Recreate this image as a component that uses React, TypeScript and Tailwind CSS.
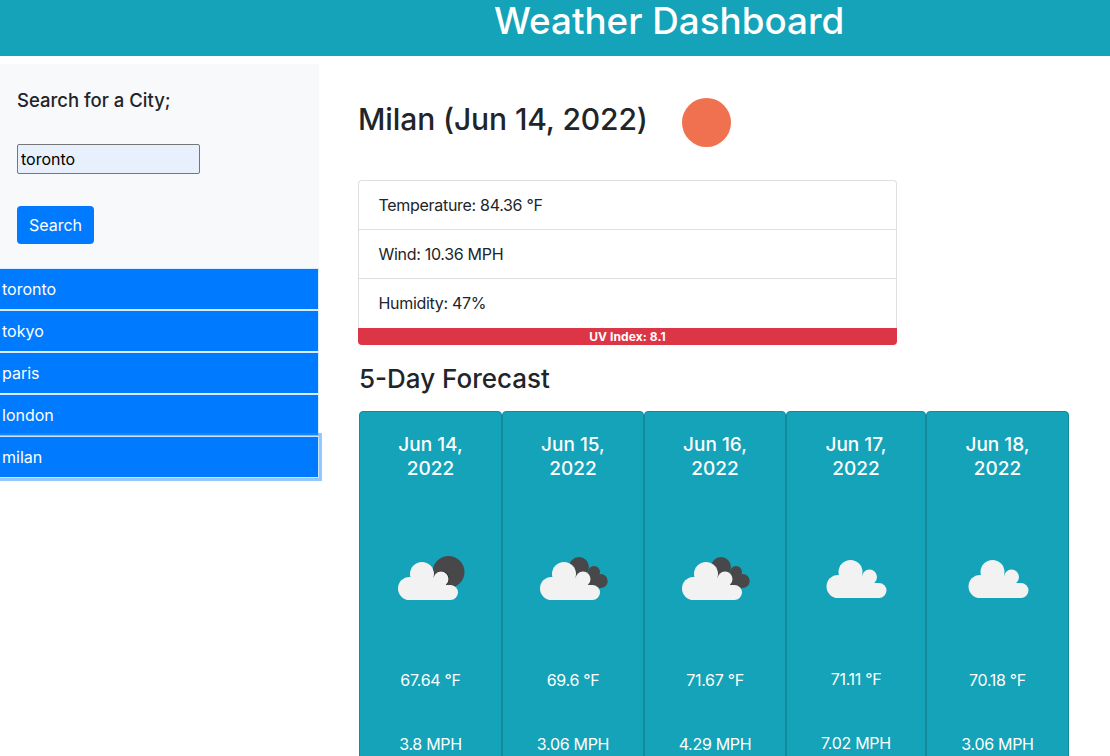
const cities = ["toronto", "tokyo", "paris", "london", "milan"]

const forecast = [
  { date: "Jun 14,", icon: "moon", temp: "67.64 °F", wind: "3.8 MPH", width: "w-[143px]", gap: "mt-[38px]" },
  { date: "Jun 15,", icon: "dark", temp: "69.6 °F", wind: "3.06 MPH", width: "w-[142px]", gap: "mt-[38px]" },
  { date: "Jun 16,", icon: "dark", temp: "71.67 °F", wind: "4.29 MPH", width: "w-[142px]", gap: "mt-[38px]" },
  { date: "Jun 17,", icon: "plain", temp: "71.11 °F", wind: "7.02 MPH", width: "w-[140px]", gap: "mt-[37px]" },
  { date: "Jun 18,", icon: "plain", temp: "70.18 °F", wind: "3.06 MPH", width: "w-[143px]", gap: "mt-[38px]" },
]

function CloudShape({ fill }: { fill: string }) {
  return (
    <g fill={fill}>
      <circle cx="24" cy="12" r="12" />
      <circle cx="43" cy="17" r="7.5" />
      <rect x="0" y="15" width="44" height="23" rx="11.5" />
      <rect x="20" y="23" width="40" height="15" rx="7.5" />
    </g>
  )
}

function DarkBack({ kind, fill }: { kind: string; fill: string }) {
  if (kind === "moon") return <circle cx="67.5" cy="42" r="16" fill={fill} />
  return (
    <g fill={fill}>
      <circle cx="56" cy="37" r="10" />
      <circle cx="71" cy="42" r="6" />
      <circle cx="77.7" cy="51" r="7" />
      <path d="M47 40 L72 44 L78 58 L50 62 Z" />
    </g>
  )
}

function WeatherIcon({ kind }: { kind: string }) {
  if (kind === "plain") {
    return (
      <svg width="100" height="100" viewBox="0 0 100 100">
        <g transform="translate(20.5 30)">
          <CloudShape fill="#f2f2f2" />
        </g>
      </svg>
    )
  }
  const clipId = `back-${kind}`
  return (
    <svg width="100" height="100" viewBox="0 0 100 100">
      <defs>
        <clipPath id={clipId}>
          <DarkBack kind={kind} fill="#000" />
        </clipPath>
      </defs>
      <DarkBack kind={kind} fill="#48484a" />
      <g clipPath={`url(#${clipId})`}>
        <g transform="translate(16.2 31.2) scale(1.03)">
          <CloudShape fill="#28282a" />
        </g>
      </g>
      <g transform="translate(17 32)">
        <CloudShape fill="#f2f2f2" />
      </g>
    </svg>
  )
}

export default function App() {
  return (
    <div className="h-[756px] w-[1110px] overflow-hidden bg-white font-['Inter',sans-serif] text-[#212529]">
      <header className="h-14 bg-[#14a3b8] pl-[494px] text-[36.8px] leading-[42px] font-medium text-white">
        Weather Dashboard
      </header>

      <div className="mt-2 flex">
        <aside className="w-[319px] shrink-0">
          <div className="flex h-[204px] flex-col items-start bg-[#f8f9fa] pt-[24px] pl-[17px]">
            <h2 className="text-[18.5px] leading-6 font-medium">Search for a City;</h2>
            <input
              readOnly
              value="toronto"
              className="mt-[32px] h-[30px] w-[183px] rounded-[2px] border border-[#767676] bg-[#e8f0fe] px-[3px] text-base text-black"
            />
            <button className="mt-8 h-[38px] w-[77px] rounded bg-[#007bff] text-base text-white">
              Search
            </button>
          </div>
          <div className="flex flex-col">
            {cities.map((city) => (
              <button
                key={city}
                className={
                  city === "milan"
                    ? "h-[42px] w-[319px] border border-l-0 border-white/80 bg-[#007bff] pl-[2px] text-left text-base text-white shadow-[0_0_0_3px_rgba(38,143,255,0.5)]"
                    : "h-[42px] w-[319px] border border-l-0 border-white/85 bg-[#007bff] pl-[2px] text-left text-base text-white"
                }
              >
                {city}
              </button>
            ))}
          </div>
        </aside>

        <main className="flex-1 pl-[39px]">
          <div className="flex h-[116px] items-start pt-[34px]">
            <h1 className="w-[324px] text-[30px] leading-[42px] font-medium tracking-[-0.1px]">Milan (Jun 14, 2022)</h1>
            <div className="h-[49px] w-[49px] rounded-full bg-[#ef7150]" />
          </div>

          <div className="w-[539px]">
            <div className="overflow-hidden rounded-t border border-b-0 border-[#dfdfdf] text-base tracking-[-0.3px]">
              <div className="flex h-[49px] items-center border-b border-[#dfdfdf] pl-[19.5px]">Temperature: 84.36 °F</div>
              <div className="flex h-[49px] items-center border-b border-[#dfdfdf] pl-[19.5px]">Wind: 10.36 MPH</div>
              <div className="flex h-[49px] items-center pb-[2px] pl-[19.5px]">Humidity: 47%</div>
            </div>
            <div className="flex h-[17px] items-center justify-center rounded-b bg-[#dc3545] text-xs font-bold tracking-[0.1px] text-white">
              UV Index: 8.1
            </div>
          </div>

          <h3 className="mt-[17px] ml-[1px] text-[26px] leading-[34px] font-medium">5-Day Forecast</h3>

          <div className="mt-[15px] ml-[1px] flex">
            {forecast.map((day) => (
              <div
                key={day.date}
                className={`${day.width} h-[400px] shrink-0 rounded border border-[#128a9c] bg-[#14a3b8] text-center text-white`}
              >
                <div className="px-5 pt-[21px] text-[19px] leading-6 font-medium">
                  {day.date}
                  <br />
                  2022
                </div>
                <div className="mt-[49px] flex justify-center">
                  <WeatherIcon kind={day.icon} />
                </div>
                <p className={`${day.gap} text-base leading-6 tracking-[-0.3px]`}>{day.temp}</p>
                <p className="mt-10 text-base leading-6 tracking-[-0.3px]">{day.wind}</p>
              </div>
            ))}
          </div>
        </main>
      </div>
    </div>
  )
}
